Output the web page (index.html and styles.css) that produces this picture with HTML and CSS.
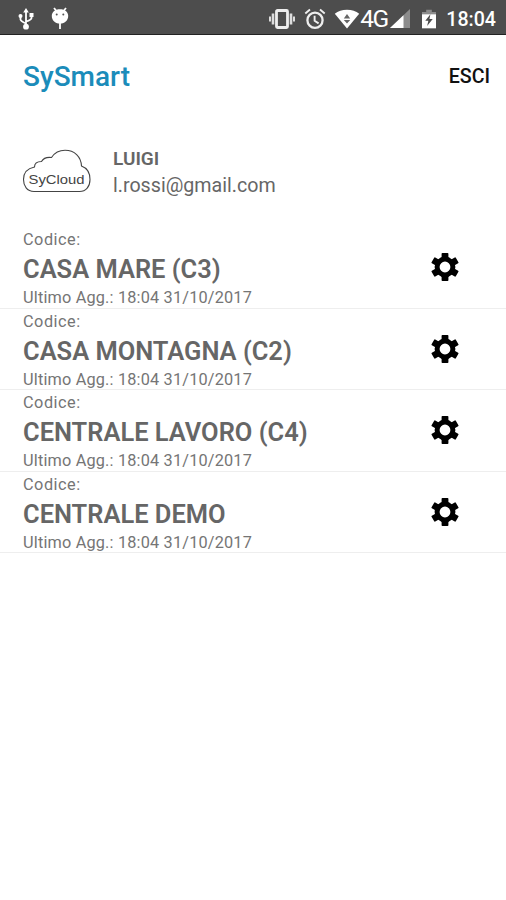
FILE: index.html
```
<!DOCTYPE html>
<html lang="it">
  <head>
    <meta charset="UTF-8" />
    <meta name="viewport" content="width=device-width, initial-scale=1.0" />
    <title>SySmart</title>

    <link rel="stylesheet" href="styles.css">
  </head>

  <body>
    <!-- gear shape, shared by all rows -->
    <svg class="defs" width="0" height="0">
      <symbol id="gear" viewBox="0 0 28 28">
        <circle cx="14" cy="14" r="7.900" fill="none" stroke="#000" stroke-width="5"/>
        <path id="teeth" d="M10.600.8q0-.8.8-.8h5.200q.8 0 .8.8v5h-6.800zM10.600 27.200q0 .8.8.8h5.200q.8 0 .8-.8v-5h-6.800z"/>
        <use href="#teeth" transform="rotate(60 14 14)"/>
        <use href="#teeth" transform="rotate(120 14 14)"/>
      </symbol>
    </svg>

    <div class="status-bar">
      <div class="status-left">
        <svg class="usb" width="16" height="22" viewBox="0 0 16 22">
          <path d="M8 3v14M2.500 8v3.500q0 1.500 5.500 4M13.500 7v3q0 1.800-5.500 3.500" fill="none" stroke="#fff" stroke-width="1.800"/>
          <path d="M8 0l2.800 4.500H5.200zM11.500 5h4v4h-4z"/>
          <circle cx="2.500" cy="8" r="2"/>
          <circle cx="8" cy="18.700" r="2.900"/>
        </svg>
        <svg class="droid" width="18" height="23" viewBox="0 0 18 23">
          <path d="M3 1l2.500 3M15 1l-2.500 3M9 15v7" fill="none" stroke="#fff" stroke-width="1.800"/>
          <path d="M9 2.200c4.800 0 8.200 2.600 8.200 6.600 0 4.500-3 7.800-8.200 7.800S.8 13.300.8 8.800c0-4 3.400-6.600 8.200-6.600z"/>
          <circle cx="5.700" cy="7.500" r="1" fill="#555"/>
          <circle cx="12.300" cy="7.500" r="1" fill="#555"/>
        </svg>
      </div>

      <div class="status-right">
        <svg class="vibrate" width="28" height="20" viewBox="0 0 28 20">
          <rect x="8.500" y="1.500" width="11" height="17" rx="1" fill="none" stroke="#eee" stroke-width="2.800"/>
          <path d="M3.700 4.500h2.600v11H3.700zM21.700 4.500h2.600v11h-2.600zM1 7.500h2v5H1zM25 7.500h2v5h-2z" fill="#ddd"/>
        </svg>
        <svg class="alarm" width="22" height="22" viewBox="0 0 22 22">
          <circle cx="11" cy="12.200" r="7.600" fill="none" stroke="#eee" stroke-width="2.300"/>
          <path d="M1.300 5.500L6 1.600M20.700 5.500L16 1.600M10.600 7.800v5l4 2.600" fill="none" stroke="#eee" stroke-width="1.900"/>
        </svg>
        <svg class="wifi" width="26" height="20" viewBox="0 0 26 20">
          <path d="M13 19.500L.8 4.800C4 2.200 8.200.8 13 .8s9 1.400 12.200 4z"/>
          <path d="M13 5l3.200 4.500H9.800zM9.800 11h6.400L13 14.500z" fill="#666"/>
        </svg>
        <div class="network">4G</div>
        <svg class="signal" width="20" height="19" viewBox="0 0 20 19">
          <path d="M20 0v19H0z" fill="#8c8c8c"/>
          <path d="M13.500 6.200V19H0z"/>
        </svg>
        <svg class="battery" width="14" height="20" viewBox="0 0 15 20">
          <path d="M4.500 0h6v2.500H15V6H0V2.500h4.500z" fill="#8c8c8c"/>
          <path d="M0 5h15v15H0z"/>
          <path d="M9 5l-5.500 7h3.300L5.500 17.500l6-7.500H8z" fill="#4d4d4d"/>
        </svg>
        <div class="clock">18:04</div>
      </div>
    </div>

    <div class="toolbar">
      <div class="title">SySmart</div>
      <div class="logout">ESCI</div>
    </div>

    <div class="user">
      <svg class="cloud" width="70" height="46" viewBox="0 0 70 46">
        <path d="M12 42.500C5 42.500 1.500 37 1.500 30.500c0-6 3.500-11 11-12.500 0-3.500 3-5.500 7-5.500 2-3.500 6-4.500 10-4 3-4.500 8-7.200 13.500-7.200 9.500 0 16 6.200 16.500 15.700 5.500 2 8.500 7 8.500 13.500 0 7-4 12-10.500 12z" fill="none" stroke="#444" stroke-width="1.100"/>
        <text class="cloud-text" x="6.500" y="35" textLength="56" lengthAdjust="spacingAndGlyphs">SyCloud</text>
      </svg>
      <div class="user-info">
        <div class="user-name">LUIGI</div>
        <div class="user-mail">l.rossi@gmail.com</div>
      </div>
    </div>

    <div class="list">
      <div class="item">
        <div class="item-text">
          <div class="label">Codice:</div>
          <div class="name">CASA MARE (C3)</div>
          <div class="updated">Ultimo Agg.: 18:04 31/10/2017</div>
        </div>
        <svg class="gear"><use href="#gear"/></svg>
      </div>
      <div class="item">
        <div class="item-text">
          <div class="label">Codice:</div>
          <div class="name">CASA MONTAGNA (C2)</div>
          <div class="updated">Ultimo Agg.: 18:04 31/10/2017</div>
        </div>
        <svg class="gear"><use href="#gear"/></svg>
      </div>
      <div class="item">
        <div class="item-text">
          <div class="label">Codice:</div>
          <div class="name">CENTRALE LAVORO (C4)</div>
          <div class="updated">Ultimo Agg.: 18:04 31/10/2017</div>
        </div>
        <svg class="gear"><use href="#gear"/></svg>
      </div>
      <div class="item">
        <div class="item-text">
          <div class="label">Codice:</div>
          <div class="name">CENTRALE DEMO</div>
          <div class="updated">Ultimo Agg.: 18:04 31/10/2017</div>
        </div>
        <svg class="gear"><use href="#gear"/></svg>
      </div>
    </div>
  </body>
</html>
```

FILE: styles.css
```
* {
  box-sizing: border-box;
}

body {
  margin: 0;
  background-color: #fff;
  font-family: Roboto, sans-serif;
  color: #666;
}

svg {
  display: block;
  flex-shrink: 0;
}

.defs {
  position: absolute;
}

.status-bar {
  display: flex;
  justify-content: space-between;
  height: 35px;
  padding: 0 10px 0 18px;
  background-color: #4d4d4d;
  border-bottom: 1px solid #222;
  color: #fff;
  fill: #fff;
}

.status-left,
.status-right {
  display: flex;
  align-items: center;
  padding-top: 3px;
}

.droid {
  margin-left: 17px;
}

.alarm {
  margin-left: 8px;
}

.wifi {
  margin-left: 8px;
}

.network {
  width: 30px;
  font-size: 24.500px;
  line-height: 30px;
  letter-spacing: -1.500px;
}

.battery {
  margin-left: 12px;
}

.clock {
  margin-left: 10px;
  padding-top: 2px;
  font-size: 19.600px;
  font-weight: 500;
  line-height: 30px;
}

.toolbar {
  display: flex;
  justify-content: space-between;
  align-items: center;
  height: 82px;
  padding: 0 16px 0 23px;
}

.title {
  font-size: 28px;
  font-weight: 500;
  color: #1b8cba;
}

.logout {
  padding-top: 2px;
  font-size: 19.600px;
  font-weight: 500;
  line-height: 24px;
  color: #111;
}

.user {
  display: flex;
  align-items: center;
  height: 110px;
  padding-left: 22px;
}

.cloud-text {
  font-family: "Liberation Sans", sans-serif;
  font-size: 13px;
  fill: #444;
}

.user-info {
  margin-left: 21px;
}

.user-name {
  font-size: 19px;
  font-weight: 600;
  line-height: 27px;
}

.user-mail {
  font-size: 19.650px;
  line-height: 27px;
}

.item {
  display: flex;
  justify-content: space-between;
  height: 81.6px;
  padding: 3px 47px 0 23px;
  border-bottom: 1px solid #eee;
}

.label,
.updated {
  font-size: 16.300px;
  line-height: 20px;
  letter-spacing: 0.18px;
  color: #757575;
}

.label {
  letter-spacing: 0.5px;
}

.name {
  padding-top: 1px;
  font-size: 25.450px;
  font-weight: 600;
  line-height: 37px;
}

.gear {
  width: 28px;
  height: 28px;
  margin-top: 23px;
}
```
